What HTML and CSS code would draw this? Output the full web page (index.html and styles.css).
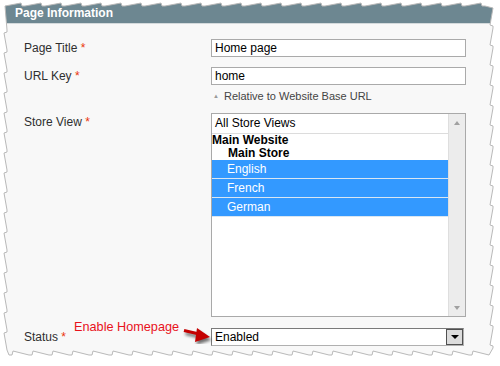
FILE: index.html
```html
<!DOCTYPE html>
<html>
<head>
<meta charset="utf-8">
<link rel="stylesheet" href="styles.css">
</head>
<body>
<div class="page">
  <svg class="torn" width="500" height="366" viewBox="0 0 500 366">
    <defs>
      <clipPath id="edgeclip">
        <path d="M5 6 l16 -3 l1 3 l3 0 l16 -3 l1 3 l3 0 l16 -3 l1 3 l3 0 l16 -3 l1 3 l3 0 l16 -3 l1 3 l3 0 l16 -3 l1 3 l3 0 l16 -3 l1 3 l3 0 l16 -3 l1 3 l3 0 l16 -3 l1 3 l3 0 l16 -3 l1 3 l3 0 l16 -3 l1 3 l3 0 l16 -3 l1 3 l3 0 l16 -3 l1 3 l3 0 l16 -3 l1 3 l3 0 l16 -3 l1 3 l3 0 l16 -3 l1 3 l3 0 l16 -3 l1 3 l3 0 l16 -3 l1 3 l3 0 l16 -3 l1 3 l3 0 l16 -3 l1 3 l3 0 l16 -3 l1 3 l3 0 l16 -3 l1 3 l3 0 l16 -3 l1 3 l3 0 l16 -3 l1 3 l3 0 L493 8 l-3 17 l3 1 l0 2 l-3 17 l3 1 l0 2 l-3 17 l3 1 l0 2 l-3 17 l3 1 l0 2 l-3 17 l3 1 l0 2 l-3 17 l3 1 l0 2 l-3 17 l3 1 l0 2 l-3 17 l3 1 l0 2 l-3 17 l3 1 l0 2 l-3 17 l3 1 l0 2 l-3 17 l3 1 l0 2 l-3 17 l3 1 l0 2 l-3 17 l3 1 l0 2 l-3 17 l3 1 l0 2 l-3 17 l3 1 l0 2 l-3 17 l3 1 l0 2 l-3 17 l3 1 l0 2 L489 355 l-16 -4 l-1 4 l-3 0 l-16 -4 l-1 4 l-3 0 l-16 -4 l-1 4 l-3 0 l-16 -4 l-1 4 l-3 0 l-16 -4 l-1 4 l-3 0 l-16 -4 l-1 4 l-3 0 l-16 -4 l-1 4 l-3 0 l-16 -4 l-1 4 l-3 0 l-16 -4 l-1 4 l-3 0 l-16 -4 l-1 4 l-3 0 l-16 -4 l-1 4 l-3 0 l-16 -4 l-1 4 l-3 0 l-16 -4 l-1 4 l-3 0 l-16 -4 l-1 4 l-3 0 l-16 -4 l-1 4 l-3 0 l-16 -4 l-1 4 l-3 0 l-16 -4 l-1 4 l-3 0 l-16 -4 l-1 4 l-3 0 l-16 -4 l-1 4 l-3 0 l-16 -4 l-1 4 l-3 0 l-16 -4 l-1 4 l-3 0 l-16 -4 l-1 4 l-3 0 l-16 -4 l-1 4 l-3 0 l-16 -4 l-1 4 l-3 0 L7 350 l-3 -17 l3 -1 l0 -2 l-3 -17 l3 -1 l0 -2 l-3 -17 l3 -1 l0 -2 l-3 -17 l3 -1 l0 -2 l-3 -17 l3 -1 l0 -2 l-3 -17 l3 -1 l0 -2 l-3 -17 l3 -1 l0 -2 l-3 -17 l3 -1 l0 -2 l-3 -17 l3 -1 l0 -2 l-3 -17 l3 -1 l0 -2 l-3 -17 l3 -1 l0 -2 l-3 -17 l3 -1 l0 -2 l-3 -17 l3 -1 l0 -2 l-3 -17 l3 -1 l0 -2 l-3 -17 l3 -1 l0 -2 l-3 -17 l3 -1 l0 -2 Z"/>
      </clipPath>
      <filter id="blur" x="-50%" y="-50%" width="200%" height="200%">
        <feGaussianBlur stdDeviation="1.5"/>
      </filter>
    </defs>
    <rect x="0" y="0" width="500" height="366" fill="#f8f8f8" clip-path="url(#edgeclip)"/>
    <rect x="0" y="0" width="500" height="23" fill="#6d8791" clip-path="url(#edgeclip)"/>
    <rect x="0" y="23" width="500" height="1" fill="#d4dadc" clip-path="url(#edgeclip)"/>
    <path class="edge-stroke" d="M5 6 l16 -3 l1 3 l3 0 l16 -3 l1 3 l3 0 l16 -3 l1 3 l3 0 l16 -3 l1 3 l3 0 l16 -3 l1 3 l3 0 l16 -3 l1 3 l3 0 l16 -3 l1 3 l3 0 l16 -3 l1 3 l3 0 l16 -3 l1 3 l3 0 l16 -3 l1 3 l3 0 l16 -3 l1 3 l3 0 l16 -3 l1 3 l3 0 l16 -3 l1 3 l3 0 l16 -3 l1 3 l3 0 l16 -3 l1 3 l3 0 l16 -3 l1 3 l3 0 l16 -3 l1 3 l3 0 l16 -3 l1 3 l3 0 l16 -3 l1 3 l3 0 l16 -3 l1 3 l3 0 l16 -3 l1 3 l3 0 l16 -3 l1 3 l3 0 l16 -3 l1 3 l3 0 l16 -3 l1 3 l3 0 L493 8 l-3 17 l3 1 l0 2 l-3 17 l3 1 l0 2 l-3 17 l3 1 l0 2 l-3 17 l3 1 l0 2 l-3 17 l3 1 l0 2 l-3 17 l3 1 l0 2 l-3 17 l3 1 l0 2 l-3 17 l3 1 l0 2 l-3 17 l3 1 l0 2 l-3 17 l3 1 l0 2 l-3 17 l3 1 l0 2 l-3 17 l3 1 l0 2 l-3 17 l3 1 l0 2 l-3 17 l3 1 l0 2 l-3 17 l3 1 l0 2 l-3 17 l3 1 l0 2 l-3 17 l3 1 l0 2 L489 355 l-16 -4 l-1 4 l-3 0 l-16 -4 l-1 4 l-3 0 l-16 -4 l-1 4 l-3 0 l-16 -4 l-1 4 l-3 0 l-16 -4 l-1 4 l-3 0 l-16 -4 l-1 4 l-3 0 l-16 -4 l-1 4 l-3 0 l-16 -4 l-1 4 l-3 0 l-16 -4 l-1 4 l-3 0 l-16 -4 l-1 4 l-3 0 l-16 -4 l-1 4 l-3 0 l-16 -4 l-1 4 l-3 0 l-16 -4 l-1 4 l-3 0 l-16 -4 l-1 4 l-3 0 l-16 -4 l-1 4 l-3 0 l-16 -4 l-1 4 l-3 0 l-16 -4 l-1 4 l-3 0 l-16 -4 l-1 4 l-3 0 l-16 -4 l-1 4 l-3 0 l-16 -4 l-1 4 l-3 0 l-16 -4 l-1 4 l-3 0 l-16 -4 l-1 4 l-3 0 l-16 -4 l-1 4 l-3 0 l-16 -4 l-1 4 l-3 0 L7 350 l-3 -17 l3 -1 l0 -2 l-3 -17 l3 -1 l0 -2 l-3 -17 l3 -1 l0 -2 l-3 -17 l3 -1 l0 -2 l-3 -17 l3 -1 l0 -2 l-3 -17 l3 -1 l0 -2 l-3 -17 l3 -1 l0 -2 l-3 -17 l3 -1 l0 -2 l-3 -17 l3 -1 l0 -2 l-3 -17 l3 -1 l0 -2 l-3 -17 l3 -1 l0 -2 l-3 -17 l3 -1 l0 -2 l-3 -17 l3 -1 l0 -2 l-3 -17 l3 -1 l0 -2 l-3 -17 l3 -1 l0 -2 l-3 -17 l3 -1 l0 -2 Z"/>
  </svg>

  <div class="content">
    <div class="head">Page Information</div>

    <div class="row r1">
      <div class="label">Page Title <span class="req">*</span></div>
      <div class="field"><div class="input">Home page</div></div>
    </div>

    <div class="row r2">
      <div class="label">URL Key <span class="req">*</span></div>
      <div class="field">
        <div class="input">home</div>
        <div class="hint"><span class="tri">&#9650;</span>Relative to Website Base URL</div>
      </div>
    </div>

    <div class="row r3">
      <div class="label">Store View <span class="req">*</span></div>
      <div class="field">
        <div class="multi">
          <div class="options">
            <div class="opt all">All Store Views</div>
            <div class="grp">Main Website</div>
            <div class="grp sub">Main Store</div>
            <div class="opt sel">English</div>
            <div class="opt sel">French</div>
            <div class="opt sel">German</div>
          </div>
          <div class="scroll">
            <span class="arr up"></span>
            <span class="arr down"></span>
          </div>
        </div>
      </div>
    </div>

    <div class="row r4">
      <div class="label">Status <span class="req">*</span></div>
      <div class="field">
        <div class="select">
          <span class="val">Enabled</span>
          <span class="btn"><span class="btn-tri"></span></span>
        </div>
      </div>
    </div>
  </div>

  <div class="note">Enable Homepage</div>
  <svg class="arrow" width="36" height="24" viewBox="180 320 36 24">
    <g filter="url(#blur)" opacity="0.55" transform="translate(1.5 3)">
      <line x1="184" y1="330.5" x2="199" y2="334" stroke="#000" stroke-width="3"/>
      <polygon points="210,337 197,328 195,342" fill="#000"/>
    </g>
    <line x1="184" y1="330.5" x2="199" y2="334" stroke="#c40000" stroke-width="3"/>
    <polygon points="210,337 197,328 195,342" fill="#c40000"/>
  </svg>
</div>
</body>
</html>
```

FILE: styles.css
```css
html, body {
  margin: 0;
  padding: 0;
  background: #ffffff;
}

.page {
  position: relative;
  width: 500px;
  height: 366px;
  overflow: hidden;
  font-family: "Liberation Sans", Arial, sans-serif;
  font-size: 12px;
  color: #2f2f2f;
}

.torn {
  position: absolute;
  left: 0;
  top: 0;
}

.edge-stroke {
  fill: none;
  stroke: #b9b9b9;
  stroke-width: 1;
}

.content {
  position: relative;
  padding-top: 4px;
}

.head {
  height: 19px;
  line-height: 19px;
  padding-left: 15px;
  color: #ffffff;
  font-weight: bold;
  font-size: 12px;
}

.row {
  display: flex;
  padding-left: 24px;
}

.r1 { margin-top: 16px; }
.r2 { margin-top: 10px; }
.r3 { margin-top: 10px; }
.r4 { margin-top: 11px; }

.label {
  width: 187px;
  line-height: 18px;
  color: #2f2f2f;
}

.req {
  color: #eb340a;
}

.field {
  width: 255px;
}

.input {
  box-sizing: border-box;
  height: 18px;
  line-height: 16px;
  border: 1px solid #aaaaaa;
  background: #ffffff;
  padding-left: 3px;
  color: #000;
}

.hint {
  margin-top: 4px;
  line-height: 14px;
  font-size: 11px;
  color: #444;
  padding-left: 2px;
}

.tri {
  font-size: 6px;
  color: #9a9a9a;
  margin-right: 5px;
  vertical-align: 2px;
}

.multi {
  box-sizing: border-box;
  height: 204px;
  border: 1px solid #a9a9a9;
  background: #ffffff;
  display: flex;
}

.options {
  flex: 1;
}

.opt.all {
  height: 19px;
  line-height: 19px;
  padding-left: 3px;
  border-bottom: 1px solid #dcdcdc;
  color: #000;
}

.grp {
  height: 13px;
  line-height: 13px;
  font-weight: bold;
  color: #000;
}

.grp.sub {
  padding-left: 16px;
}

.opt.sel {
  height: 18px;
  line-height: 18px;
  padding-left: 15px;
  background: #3399ff;
  color: #ffffff;
  border-bottom: 1px solid #d9e6f2;
}

.scroll {
  width: 16px;
  background: #ececec;
  border-left: 1px solid #dedede;
  display: flex;
  flex-direction: column;
  justify-content: space-between;
  align-items: center;
  padding: 7px 0 6px;
}

.arr {
  width: 0;
  height: 0;
  border-left: 3px solid transparent;
  border-right: 3px solid transparent;
}

.arr.up {
  border-bottom: 4px solid #a0a0a0;
}

.arr.down {
  border-top: 4px solid #a0a0a0;
}

.select {
  box-sizing: border-box;
  width: 253px;
  height: 18px;
  border: 1px solid #7a7a7a;
  border-right-color: #b0b0b0;
  border-bottom-color: #b0b0b0;
  background: #ffffff;
  display: flex;
  align-items: center;
  justify-content: space-between;
}

.val {
  padding-left: 3px;
  color: #000;
  line-height: 16px;
}

.btn {
  box-sizing: border-box;
  width: 17px;
  height: 16px;
  background: #dcdcdc;
  border: 1px solid #505050;
  display: flex;
  align-items: center;
  justify-content: center;
}

.btn-tri {
  width: 0;
  height: 0;
  border-left: 4px solid transparent;
  border-right: 4px solid transparent;
  border-top: 4px solid #000;
}

.note {
  position: absolute;
  left: 74px;
  top: 319px;
  font-size: 12.7px;
  line-height: 16px;
  letter-spacing: 0;
  color: #e8121c;
}

.arrow {
  position: absolute;
  left: 180px;
  top: 320px;
}
```
